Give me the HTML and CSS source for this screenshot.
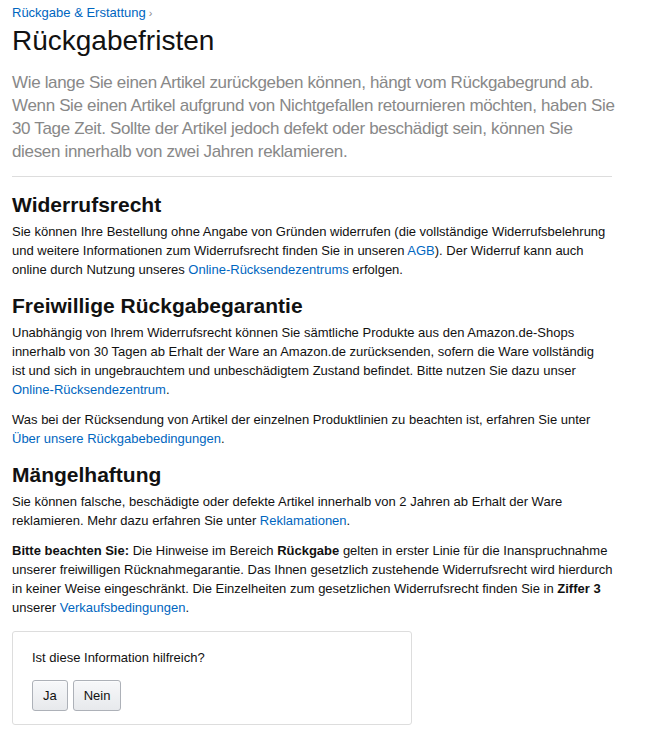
FILE: index.html
```html
<!DOCTYPE html>
<html lang="de">
<head>
<meta charset="utf-8">
<title>Rückgabefristen</title>
<link rel="stylesheet" href="styles.css">
</head>
<body>
<div class="page">
  <nav class="crumb"><a href="#">Rückgabe &amp; Erstattung</a><span class="sep">›</span></nav>
  <h1 class="title">Rückgabefristen</h1>
  <p class="intro">Wie lange Sie einen Artikel zurückgeben können, hängt vom Rückgabegrund ab. Wenn Sie einen Artikel aufgrund von Nichtgefallen retournieren möchten, haben Sie 30 Tage Zeit. Sollte der Artikel jedoch defekt oder beschädigt sein, können Sie diesen innerhalb von zwei Jahren reklamieren.</p>
  <hr class="divider">
  <h2 class="h2 first">Widerrufsrecht</h2>
  <p class="txt">Sie können Ihre Bestellung ohne Angabe von Gründen widerrufen (die vollständige Widerrufsbelehrung und weitere Informationen zum Widerrufsrecht finden Sie in unseren <a href="#">AGB</a>). Der Widerruf kann auch online durch Nutzung unseres <a href="#">Online-Rücksendezentrums</a> erfolgen.</p>
  <h2 class="h2">Freiwillige Rückgabegarantie</h2>
  <p class="txt">Unabhängig von Ihrem Widerrufsrecht können Sie sämtliche Produkte aus den Amazon.de-Shops innerhalb von 30 Tagen ab Erhalt der Ware an Amazon.de zurücksenden, sofern die Ware vollständig <span class="nw">ist und</span> sich in ungebrauchtem und unbeschädigtem Zustand befindet. Bitte nutzen Sie dazu unser <a href="#">Online-Rücksendezentrum</a>.</p>
  <p class="txt">Was bei der Rücksendung von Artikel der einzelnen Produktlinien zu beachten ist, erfahren Sie unter <a href="#">Über unsere Rückgabebedingungen</a>.</p>
  <h2 class="h2">Mängelhaftung</h2>
  <p class="txt">Sie können falsche, beschädigte oder defekte Artikel innerhalb von 2 Jahren ab Erhalt der Ware reklamieren. Mehr dazu erfahren Sie unter <a href="#">Reklamationen</a>.</p>
  <p class="txt"><b>Bitte beachten Sie:</b> Die Hinweise im Bereich <b>Rückgabe</b> gelten in erster Linie für die Inanspruchnahme unserer freiwilligen Rücknahmegarantie. Das Ihnen gesetzlich zustehende Widerrufsrecht wird hierdurch in keiner Weise eingeschränkt. Die Einzelheiten zum gesetzlichen Widerrufsrecht finden Sie in <b>Ziffer 3</b> unserer <a href="#">Verkaufsbedingungen</a>.</p>
  <div class="feedback">
    <p class="question">Ist diese Information hilfreich?</p>
    <div class="buttons">
      <button class="btn">Ja</button>
      <button class="btn">Nein</button>
    </div>
  </div>
</div>
</body>
</html>
```

FILE: styles.css
```css
html, body {
  margin: 0;
  padding: 0;
  background: #fff;
}
body {
  font-family: "Liberation Sans", Arial, sans-serif;
  color: #111;
  font-size: 13px;
  line-height: 19px;
}
a {
  color: #0066c0;
  text-decoration: none;
  white-space: nowrap;
}
.nw {
  white-space: nowrap;
}
.page {
  padding: 3px 12px 12px 12px;
  width: 604px;
}
.crumb {
  font-size: 13px;
  line-height: 19px;
}
.crumb .sep {
  color: #888;
  margin-left: 3px;
  font-size: 11px;
}
.title {
  margin: 0;
  font-size: 28px;
  font-weight: normal;
  line-height: 36px;
  color: #111;
}
.intro {
  margin: 12px 0 0 0;
  font-size: 17px;
  line-height: 23px;
  color: #888;
  letter-spacing: -0.34px;
}
.divider {
  margin: 13px 4px 0 0;
  border: 0;
  border-top: 1px solid #ddd;
  height: 0;
}
.h2 {
  margin: 13px 0 4px 0;
  font-size: 21px;
  line-height: 27px;
  font-weight: bold;
}
.h2.first {
  margin-top: 14px;
}
.txt {
  margin: 0 0 11px 0;
}
.feedback {
  margin-top: 14px;
  width: 360px;
  border: 1px solid #ddd;
  border-radius: 3px;
  padding: 16px 19px 13px 19px;
}
.question {
  margin: 0 0 13px 0;
}
.buttons {
  display: flex;
  gap: 5px;
}
.btn {
  font-family: "Liberation Sans", Arial, sans-serif;
  font-size: 13px;
  color: #111;
  height: 31px;
  padding: 0 10px;
  border: 1px solid #adb1b8;
  border-radius: 3px;
  background: linear-gradient(to bottom, #f7f8fa, #e7e9ec);
  box-shadow: inset 0 1px 0 rgba(255,255,255,0.6);
}
```
